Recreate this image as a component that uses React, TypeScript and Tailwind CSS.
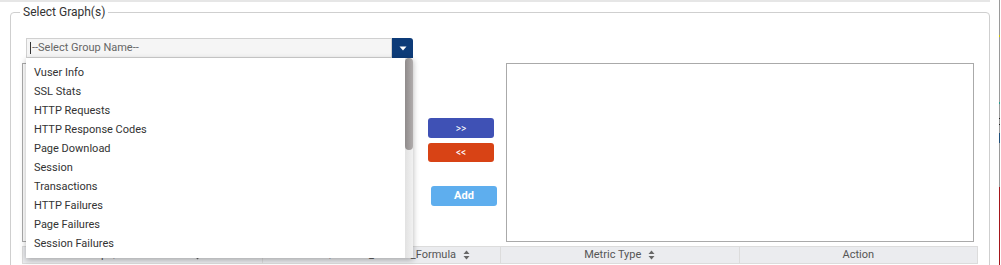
import { useState } from "react";

const groups = [
  "Vuser Info",
  "SSL Stats",
  "HTTP Requests",
  "HTTP Response Codes",
  "Page Download",
  "Session",
  "Transactions",
  "HTTP Failures",
  "Page Failures",
  "Session Failures",
];

const columns = ["Graph/Derived Name", "Metrics/Indices_Derived_Formula", "Metric Type", "Action"];

function SortIcon() {
  return (
    <svg width="7" height="10" viewBox="0 0 7 10" className="ml-[7px] inline-block">
      <path d="M3.5 0.5 L6.5 4 L0.5 4 Z" fill="#666" />
      <path d="M3.5 9.5 L6.5 6 L0.5 6 Z" fill="#666" />
    </svg>
  );
}

export default function App() {
  const [open] = useState(true);

  return (
    <div
      className="relative h-[265px] w-[1001px] overflow-hidden bg-white text-[#333]"
      style={{ fontFamily: "Roboto, 'Liberation Sans', sans-serif" }}
    >
      <div className="h-[2px] w-[990px] bg-[#e6e6e6]" />

      {/* right edge strip of neighbouring panel */}
      <div className="absolute right-[1px] top-0 flex h-full w-[1px] flex-col bg-[#9a9a9a]">
        <div className="mt-[35px] h-[2px] bg-[#d4c400]" />
        <div className="mt-[65px] h-[2px] bg-[#2a9d8f]" />
        <div className="mt-[14px] h-px bg-[#222]" />
        <div className="mt-[5px] h-px bg-[#222]" />
        <div className="mt-[8px] h-[10px] bg-[#1f4e79]" />
        <div className="mt-[44px] flex-1 bg-[#a4161a]" />
      </div>

      <fieldset className="ml-[10px] mt-[3px] h-[300px] w-[980px] rounded-[4px] border border-[#cfcfcf] px-0">
        <legend className="ml-[9px] px-[3px] text-[12px] leading-[14px] text-[#333]">Select Graph(s)</legend>

        <div className="relative ml-[15px] mt-[19px] flex h-[20px] w-[387px]">
          <div className="flex flex-1 items-center border border-[#d0d0d0] bg-[#f5f5f5] pl-[3px] text-[11px] text-[#666]">
            <span className="mr-px h-[12px] w-px bg-[#333]" />
            --Select Group Name--
          </div>
          <div className="flex w-[21px] items-center justify-center rounded-tr-[3px] bg-[#0d3b78]">
            <svg width="8" height="5" viewBox="0 0 8 5">
              <path d="M0.5 0.5 L7.5 0.5 L4 4.5 Z" fill="#fff" />
            </svg>
          </div>
        </div>

        <div className="ml-[11px] mt-[5px] flex">
          <div className="h-[179px] w-[390px] border border-[#aaa]" />
          <div className="flex w-[94px] flex-col">
            <button className="ml-[16px] mt-[55px] h-[20px] w-[66px] rounded-[3px] bg-[#3f51b5] text-[10px] text-white">
              &gt;&gt;
            </button>
            <button className="ml-[16px] mt-[5px] h-[19px] w-[66px] rounded-[3px] bg-[#d84315] text-[10px] text-white">
              &lt;&lt;
            </button>
            <button className="ml-[19px] mt-[24px] h-[20px] w-[66px] rounded-[3px] bg-[#5eaeee] text-[11px] font-bold text-white">
              Add
            </button>
          </div>
          <div className="h-[179px] w-[468px] border border-[#aaa]" />
        </div>

        <div className="ml-[11px] mt-[4px] grid w-[956px] grid-cols-4 border border-[#dcdcdc] bg-[#ebecef]">
          {columns.map((c, i) => (
            <div
              key={c}
              className={`flex h-[16px] items-center justify-center text-[11px] text-[#555] ${
                i > 0 ? "border-l border-[#dcdcdc]" : ""
              }`}
            >
              {c}
              {i < 3 && <SortIcon />}
            </div>
          ))}
        </div>
      </fieldset>

      {open && (
        <div className="absolute left-[26px] top-[58px] h-[200px] w-[387px] bg-white shadow-[0_2px_6px_rgba(0,0,0,0.3)]">
          <ul className="pt-[5px] text-[11px] text-[#333]">
            {groups.map((g) => (
              <li key={g} className="h-[19px] pl-[8px] leading-[19px]">
                {g}
              </li>
            ))}
          </ul>
          <div className="absolute bottom-0 right-0 top-0 w-[8px] bg-gradient-to-r from-[#e2e2e2] to-[#f1f1f1]">
            <div className="h-[92px] w-[8px] rounded-[4px] bg-gradient-to-r from-[#8f8b8b] to-[#b0acac]" />
          </div>
        </div>
      )}
    </div>
  );
}
